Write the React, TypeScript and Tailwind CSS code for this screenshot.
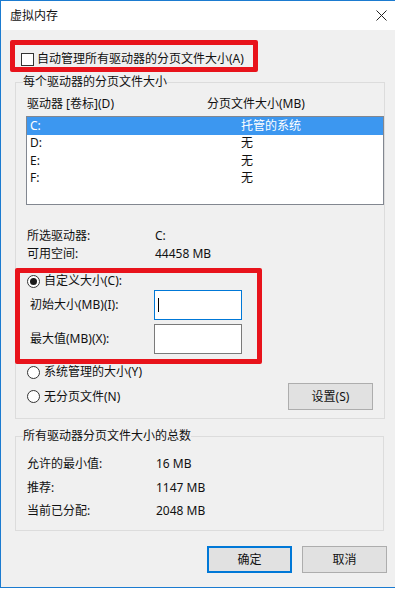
import React from 'react';

type Drive = { letter: string; size: string; selected?: boolean };

const drives: Drive[] = [
  { letter: 'C:', size: '托管的系统', selected: true },
  { letter: 'D:', size: '无' },
  { letter: 'E:', size: '无' },
  { letter: 'F:', size: '无' },
];

const Radio: React.FC<{ checked?: boolean; label: string }> = ({ checked = false, label }) => (
  <label className="flex items-center h-4 gap-[4px]">
    <span className="w-[13px] h-[13px] rounded-full border border-[#333] bg-white flex items-center justify-center">
      {checked && <span className="w-[7px] h-[7px] rounded-full bg-[#1a1a1a]" />}
    </span>
    <span>{label}</span>
  </label>
);

const WinButton: React.FC<{ label: string; primary?: boolean }> = ({ label, primary = false }) => (
  <button
    className={
      primary
        ? 'w-[85px] h-[27px] bg-[#e1e1e1] border-2 border-[#0078d7] flex items-center justify-center'
        : 'w-[85px] h-[27px] bg-[#e1e1e1] border border-[#adadad] flex items-center justify-center'
    }
  >
    {label}
  </button>
);

export default function App() {
  return (
    <div className="relative w-[395px] h-[588px] overflow-hidden bg-[#f0f0f0] border-l border-t border-b border-[#1b7bd0] text-[12px] leading-[16px] text-[#111] font-['Noto_Sans','Noto_Sans_CJK_SC',sans-serif]">
      {/* 标题栏 */}
      <div className="h-[29px] bg-white flex items-center justify-between pl-[9px] pr-[8px]">
        <span>虚拟内存</span>
        <svg width="11" height="11" viewBox="0 0 11 11">
          <path d="M0.5 0.5 L10.5 10.5 M10.5 0.5 L0.5 10.5" stroke="#222" strokeWidth="1" fill="none" />
        </svg>
      </div>

      <div className="pt-[21px]">
        <label className="flex items-center h-4 pl-[20px] gap-[3px]">
          <span className="w-[13px] h-[13px] border border-[#333] bg-white" />
          <span>自动管理所有驱动器的分页文件大小(A)</span>
        </label>

        <fieldset className="mt-[7px] ml-[14px] w-[369px] border border-[#dcdcdc] pl-[11px] pb-[8px]">
          <legend className="-ml-[4px] leading-[16px]">每个驱动器的分页文件大小</legend>

          <div className="mt-[6px] flex h-4 items-center">
            <span className="w-[180px]">驱动器 [卷标](D)</span>
            <span>分页文件大小(MB)</span>
          </div>

          <div className="mt-[4px] -ml-[1px] w-[358px] h-[89px] border border-[#828790] bg-white">
            {drives.map((d) => (
              <div
                key={d.letter}
                className={
                  d.selected
                    ? 'flex h-[17.5px] items-center bg-[#3c97f0] text-white'
                    : 'flex h-[17.5px] items-center'
                }
              >
                <span className="w-[214px] pl-[3px]">{d.letter}</span>
                <span>{d.size}</span>
              </div>
            ))}
          </div>

          <div className="mt-[23px] grid grid-cols-[128px_1fr] gap-y-[2px]">
            <span>所选驱动器:</span>
            <span>C:</span>
            <span>可用空间:</span>
            <span>44458 MB</span>
          </div>

          <div className="mt-[11px]">
            <Radio checked label="自定义大小(C):" />
          </div>

          <div className="mt-[1px] flex items-center">
            <span className="w-[127px] pl-[3px]">初始大小(MB)(I):</span>
            <div className="w-[88px] h-[30px] border border-[#0078d7] bg-white flex items-center">
              <span className="ml-[3px] w-px h-[14px] bg-black" />
            </div>
          </div>

          <div className="mt-[4px] flex items-center">
            <span className="w-[127px] pl-[3px]">最大值(MB)(X):</span>
            <div className="w-[88px] h-[30px] border border-[#7a7a7a] bg-white" />
          </div>

          <div className="mt-[10px]">
            <Radio label="系统管理的大小(Y)" />
          </div>

          <div className="mt-[3px] flex items-center justify-between pr-[11px]">
            <Radio label="无分页文件(N)" />
            <WinButton label="设置(S)" />
          </div>
        </fieldset>

        <fieldset className="mt-[9px] ml-[14px] w-[369px] border border-[#dcdcdc] pl-[11px] pb-[11px]">
          <legend className="-ml-[4px] leading-[16px]">所有驱动器分页文件大小的总数</legend>
          <div className="mt-[12px] grid grid-cols-[129px_1fr] gap-y-[7.5px]">
            <span>允许的最小值:</span>
            <span>16 MB</span>
            <span>推荐:</span>
            <span>1147 MB</span>
            <span>当前已分配:</span>
            <span>2048 MB</span>
          </div>
        </fieldset>

        <div className="mt-[15px] flex justify-end gap-[10px] pr-[8px]">
          <WinButton label="确定" primary />
          <WinButton label="取消" />
        </div>
      </div>

      {/* 红色标注框 */}
      <div className="pointer-events-none absolute left-[9px] top-[39px] w-[248px] h-[32px] border-[5px] border-[#e8131b] rounded-[2px]" />
      <div className="pointer-events-none absolute left-[14px] top-[267px] w-[247px] h-[96px] border-[5px] border-[#e8131b] rounded-[2px]" />
    </div>
  );
}
